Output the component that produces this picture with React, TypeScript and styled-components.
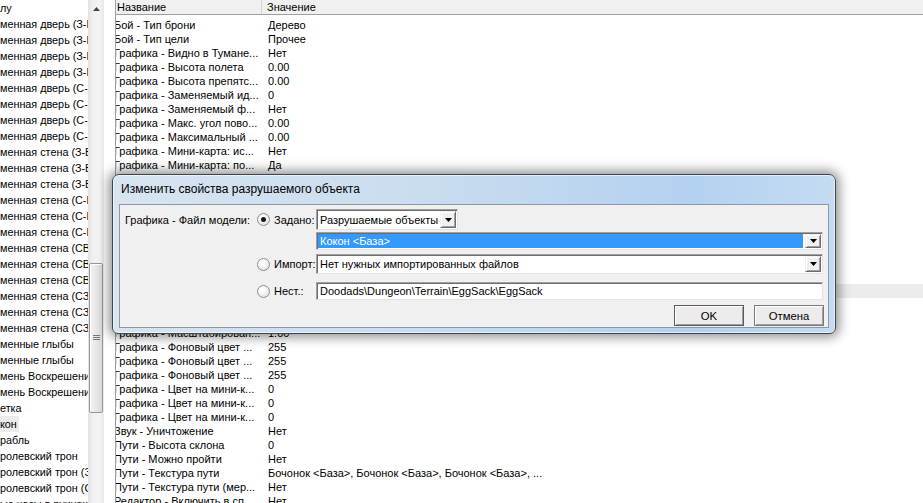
import React from "react";
import styled, { createGlobalStyle } from "styled-components";

const GlobalStyle = createGlobalStyle`
  html, body {
    margin: 0;
    padding: 0;
  }
  body {
    width: 923px;
    height: 503px;
    overflow: hidden;
    background: #fff;
    font-family: "Liberation Sans", Arial, sans-serif;
  }
`;

const Screen = styled.div`
  position: relative;
  display: flex;
  width: 923px;
  height: 503px;
  overflow: hidden;
  background: #fff;
`;

// ---- left tree ----

const TreePane = styled.div`
  display: flex;
  flex-shrink: 0;
  width: 104px;
  height: 100%;
`;

const TreeList = styled.div`
  width: 88px;
  overflow: hidden;
  font-size: 10.8px;
  color: #000;
`;

const TreeItem = styled.div`
  height: 16px;
  line-height: 16px;
  white-space: nowrap;
`;

const TreeLabel = styled.span<{ $selected?: boolean }>`
  display: inline-block;
  padding-right: 2px;
  background: ${(p) => (p.$selected ? "#ebebeb" : "transparent")};
`;

const ScrollBar = styled.div`
  display: flex;
  flex-direction: column;
  width: 16px;
  background: linear-gradient(to right, #e2e2e2, #f0f0f0 30%, #f4f4f4 70%, #e8e8e8);
`;

const ScrollArrow = styled.div`
  display: flex;
  align-items: center;
  justify-content: center;
  height: 17px;
`;

const ScrollThumb = styled.div<{ $top: number; $height: number }>`
  display: flex;
  align-items: center;
  justify-content: center;
  margin: ${(p) => p.$top}px 1px 0 1px;
  height: ${(p) => p.$height}px;
  border: 1px solid #979797;
  border-radius: 2px;
  background: linear-gradient(to right, #f3f3f3, #e8e8e8 50%, #d9d9d9);
  box-shadow: inset 1px 1px 0 #fff;
`;

const Splitter = styled.div`
  width: 11px;
  flex-shrink: 0;
  background: #fff;
`;

// ---- property list ----

const ListPane = styled.div`
  display: flex;
  flex-direction: column;
  flex: 1;
  border-left: 1px solid #a0a0a0;
  font-size: 11px;
  color: #000;
`;

const Header = styled.div`
  display: flex;
  height: 14px;
  border-bottom: 1px solid #a0a0a0;
  background: #f0f0f0;
`;

const HeaderCell = styled.div<{ $width?: number; $pad: number }>`
  width: ${(p) => (p.$width ? `${p.$width}px` : "auto")};
  flex: ${(p) => (p.$width ? "none" : 1)};
  padding-left: ${(p) => p.$pad}px;
  line-height: 14px;
  border-right: ${(p) => (p.$width ? "1px solid #d5d5d5" : "none")};
  white-space: nowrap;
  box-sizing: border-box;
`;

const Rows = styled.div`
  padding-top: 3px;
`;

const Row = styled.div<{ $selected?: boolean }>`
  display: flex;
  height: 14px;
  line-height: 14px;
  background: ${(p) => (p.$selected ? "#ececec" : "transparent")};
`;

const NameCell = styled.div`
  width: 147px;
  flex-shrink: 0;
  overflow: hidden;
  white-space: nowrap;
  text-indent: -2px;
`;

const ValueCell = styled.div`
  padding-left: 5px;
  white-space: nowrap;
`;

// ---- dialog ----

const Dialog = styled.div`
  position: absolute;
  left: 112px;
  top: 174px;
  width: 724px;
  height: 160px;
  box-sizing: border-box;
  display: flex;
  flex-direction: column;
  padding: 0 6px 5px 6px;
  border: 1px solid #3a4552;
  border-radius: 7px 7px 6px 6px;
  background: linear-gradient(to right, #d8e4f0 0%, #c9dcef 45%, #b3d1f0 80%, #c4dcf2 100%);
  box-shadow: 0 0 12px 3px rgba(0, 0, 0, 0.45), inset 0 0 0 1px rgba(255, 255, 255, 0.6);
  color: #000;
`;

const Title = styled.div`
  height: 29px;
  line-height: 29px;
  padding-left: 2px;
  font-size: 12px;
  white-space: nowrap;
`;

const Client = styled.div`
  flex: 1;
  display: flex;
  flex-direction: column;
  padding: 4px 0 0 5px;
  background: #f0f0f0;
  border: 1px solid #8a98a8;
  font-size: 11px;
`;

const FieldRow = styled.div<{ $height: number; $mt?: number }>`
  display: grid;
  grid-template-columns: 132px 17px 42px 507px;
  align-items: center;
  height: ${(p) => p.$height}px;
  margin-top: ${(p) => p.$mt ?? 0}px;
`;

const Label = styled.span`
  white-space: nowrap;
`;

const Radio = styled.span<{ $checked?: boolean }>`
  position: relative;
  width: 11px;
  height: 11px;
  border: 1px solid #8e8f8f;
  border-radius: 50%;
  background: radial-gradient(circle at 40% 35%, #ffffff 20%, #e6e6e6 70%, #cfcfcf);

  &::after {
    content: "";
    display: ${(p) => (p.$checked ? "block" : "none")};
    position: absolute;
    left: 3px;
    top: 3px;
    width: 5px;
    height: 5px;
    border-radius: 50%;
    background: #1a1a1a;
  }
`;

const Field = styled.div<{ $width?: number }>`
  display: flex;
  align-items: stretch;
  height: 100%;
  width: ${(p) => (p.$width ? `${p.$width}px` : "100%")};
  box-sizing: border-box;
  border: 1px solid #a0a0a0;
  border-right-color: #e3e3e3;
  border-bottom-color: #e3e3e3;
  background: #fff;
  box-shadow: inset 1px 1px 0 #6d6d6d;
`;

const FieldText = styled.div<{ $highlight?: boolean }>`
  flex: 1;
  display: flex;
  align-items: center;
  margin: 1px;
  padding-left: 2px;
  white-space: nowrap;
  overflow: hidden;
  color: ${(p) => (p.$highlight ? "#fff" : "#000")};
  background: ${(p) => (p.$highlight ? "#3399ff" : "transparent")};
`;

const DropButton = styled.div`
  display: flex;
  align-items: center;
  justify-content: center;
  width: 16px;
  margin: 1px;
  box-sizing: border-box;
  background: #f0f0f0;
  border: 1px solid #f0f0f0;
  border-right-color: #6d6d6d;
  border-bottom-color: #6d6d6d;
  box-shadow: inset 1px 1px 0 #fff, inset -1px -1px 0 #a0a0a0;
`;

const ButtonBar = styled.div`
  display: flex;
  justify-content: flex-end;
  gap: 10px;
  margin-top: 5px;
  margin-right: 4px;
`;

const Button = styled.button<{ $default?: boolean }>`
  width: 70px;
  height: 21px;
  padding: 0;
  font-family: "Liberation Sans", Arial, sans-serif;
  font-size: 11.3px;
  color: #000;
  background: #ececec;
  border: 1px solid ${(p) => (p.$default ? "#5a5a5a" : "#7a7a7a")};
  box-shadow: inset 1px 1px 0 #fff, inset -1px -1px 0 #a0a0a0;
`;

const Arrow = () => (
  <svg width="7" height="4" viewBox="0 0 7 4">
    <path d="M0 0h7L3.5 4z" fill="#000" />
  </svg>
);

const UpArrow = () => (
  <svg width="7" height="4" viewBox="0 0 7 4">
    <path d="M0 4h7L3.5 0z" fill="#444" />
  </svg>
);

const Grip = () => (
  <svg width="7" height="6" viewBox="0 0 7 6">
    <path d="M0 0.5h7M0 2.5h7M0 4.5h7" stroke="#777" strokeWidth="1" />
  </svg>
);

const treeItems = [
  "лу",
  "менная дверь (З-Н)",
  "менная дверь (З-Н)",
  "менная дверь (З-Н)",
  "менная дверь (З-Н)",
  "менная дверь (С-Н)",
  "менная дверь (С-Н)",
  "менная дверь (С-Н)",
  "менная дверь (С-Н)",
  "менная стена (З-В)",
  "менная стена (З-В)",
  "менная стена (З-В)",
  "менная стена (С-Н)",
  "менная стена (С-Н)",
  "менная стена (С-Н)",
  "менная стена (СВ)",
  "менная стена (СВ)",
  "менная стена (СВ)",
  "менная стена (СЗ)",
  "менная стена (СЗ)",
  "менная стена (СЗ)",
  "менные глыбы",
  "менные глыбы",
  "мень Воскрешения",
  "мень Воскрешения",
  "етка",
  "кон",
  "рабль",
  "ролевский трон",
  "ролевский трон (З)",
  "ролевский трон (С)",
  "ые часы в руинах",
];

const rows: [string, string][] = [
  ["Бой - Тип брони", "Дерево"],
  ["Бой - Тип цели", "Прочее"],
  ["Графика - Видно в Тумане...", "Нет"],
  ["Графика - Высота полета", "0.00"],
  ["Графика - Высота препятс...", "0.00"],
  ["Графика - Заменяемый ид...", "0"],
  ["Графика - Заменяемый ф...", "Нет"],
  ["Графика - Макс. угол пово...", "0.00"],
  ["Графика - Максимальный ...", "0.00"],
  ["Графика - Мини-карта: ис...", "Нет"],
  ["Графика - Мини-карта: по...", "Да"],
  ["Графика - Мини-карта: ...", "Да"],
  ["Графика - Мини-карта: цв...", "Да"],
  ["Графика - Минимальный ...", "0.00"],
  ["Графика - Модель", "Кокон"],
  ["Графика - Модель (SD)", "Кокон"],
  ["Графика - Направление ...", "0.00"],
  ["Графика - Номер вариан...", "1"],
  ["Графика - Отбирать", "Да"],
  ["Графика - Файл модели", "Кокон <База>"],
  ["Графика - Тень", "Нет"],
  ["Графика - Масштаб", "1.00"],
  ["Графика - Масштабирован...", "1.00"],
  ["Графика - Фоновый цвет ...", "255"],
  ["Графика - Фоновый цвет ...", "255"],
  ["Графика - Фоновый цвет ...", "255"],
  ["Графика - Цвет на мини-к...", "0"],
  ["Графика - Цвет на мини-к...", "0"],
  ["Графика - Цвет на мини-к...", "0"],
  ["Звук - Уничтожение", "Нет"],
  ["Пути - Высота склона", "0"],
  ["Пути - Можно пройти", "Нет"],
  ["Пути - Текстура пути", "Бочонок <База>, Бочонок <База>, Бочонок <База>, ..."],
  ["Пути - Текстура пути (мер...", "Нет"],
  ["Редактор - Включить в сп...", "Нет"],
];

const SELECTED_ROW = 19;
const SELECTED_TREE = 26;

export default function App() {
  return (
    <Screen>
      <GlobalStyle />
      <TreePane>
        <TreeList>
          {treeItems.map((t, i) => (
            <TreeItem key={i}>
              <TreeLabel $selected={i === SELECTED_TREE}>{t}</TreeLabel>
            </TreeItem>
          ))}
        </TreeList>
        <ScrollBar>
          <ScrollArrow>
            <UpArrow />
          </ScrollArrow>
          <ScrollThumb $top={246} $height={148}>
            <Grip />
          </ScrollThumb>
        </ScrollBar>
      </TreePane>
      <Splitter />
      <ListPane>
        <Header>
          <HeaderCell $width={146} $pad={1}>
            Название
          </HeaderCell>
          <HeaderCell $pad={5}>Значение</HeaderCell>
        </Header>
        <Rows>
          {rows.map(([name, value], i) => (
            <Row key={i} $selected={i === SELECTED_ROW}>
              <NameCell>{name}</NameCell>
              <ValueCell>{value}</ValueCell>
            </Row>
          ))}
        </Rows>
      </ListPane>

      <Dialog>
        <Title>Изменить свойства разрушаемого объекта</Title>
        <Client>
          <FieldRow $height={21}>
            <Label>Графика - Файл модели:</Label>
            <Radio $checked />
            <Label>Задано:</Label>
            <Field $width={142}>
              <FieldText>Разрушаемые объекты</FieldText>
              <DropButton>
                <Arrow />
              </DropButton>
            </Field>
          </FieldRow>
          <FieldRow $height={18} $mt={2}>
            <span />
            <span />
            <span />
            <Field>
              <FieldText $highlight>Кокон &lt;База&gt;</FieldText>
              <DropButton>
                <Arrow />
              </DropButton>
            </Field>
          </FieldRow>
          <FieldRow $height={20} $mt={4}>
            <span />
            <Radio />
            <Label>Импорт:</Label>
            <Field>
              <FieldText>Нет нужных импортированных файлов</FieldText>
              <DropButton>
                <Arrow />
              </DropButton>
            </Field>
          </FieldRow>
          <FieldRow $height={18} $mt={8}>
            <span />
            <Radio />
            <Label>Нест.:</Label>
            <Field>
              <FieldText>Doodads\Dungeon\Terrain\EggSack\EggSack</FieldText>
            </Field>
          </FieldRow>
          <ButtonBar>
            <Button $default>OK</Button>
            <Button>Отмена</Button>
          </ButtonBar>
        </Client>
      </Dialog>
    </Screen>
  );
}
